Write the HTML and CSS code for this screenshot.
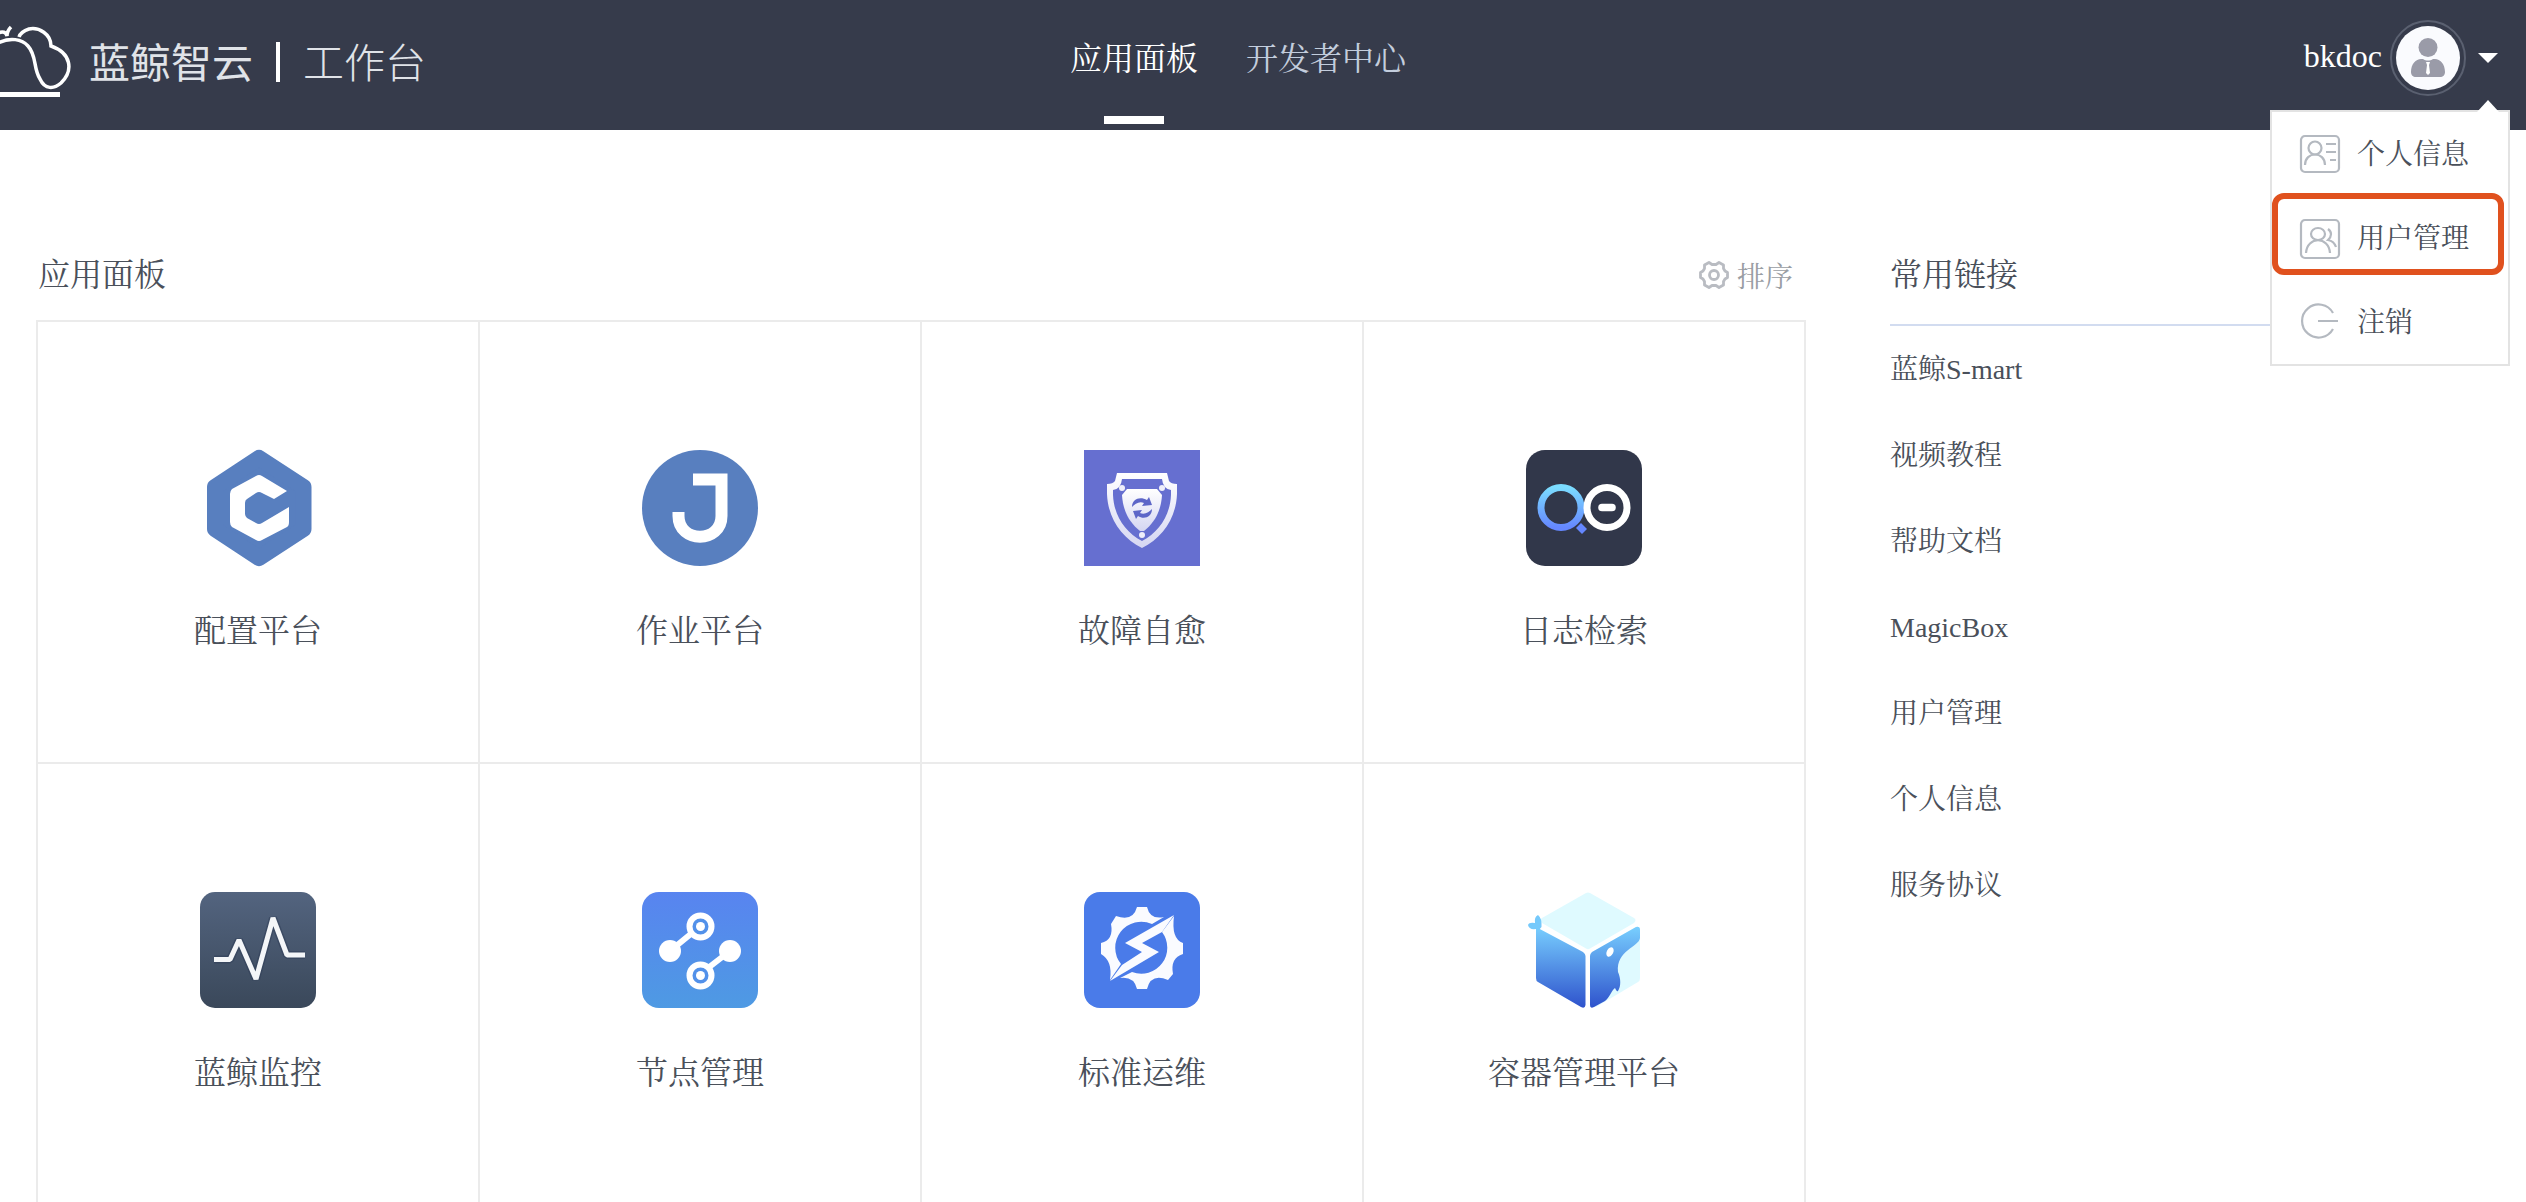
FILE: index.html
```html
<!DOCTYPE html>
<html lang="zh-CN">
<head>
<meta charset="utf-8">
<title>蓝鲸智云工作台</title>
<link rel="stylesheet" href="styles.css">
</head>
<body>
<header class="topbar">
  <a class="brand">
    <svg class="brand-mark" viewBox="0 0 72 130" fill="none" stroke="#fff">
      <path d="M-2 43C10 37 22 39 28 46C37 56 33 68 40 79C45 90 54 89 61 83C74 70 71 53 51 46C51 34 39 27 29 29C23 31 20 34 19 37" stroke-width="3.500"/>
      <path d="M-2 33C3 31 6 32 7 36C7 32 9 29 11 27" stroke-width="3.500"/>
      <path d="M0 94.500H60" stroke-width="5"/>
    </svg>
    <span class="brand-name">蓝鲸智云</span>
    <i class="brand-rule"></i>
    <span class="brand-sub">工作台</span>
  </a>
  <nav class="nav">
    <a class="nav-item active">应用面板</a>
    <a class="nav-item">开发者中心</a>
  </nav>
  <div class="user">
    <span class="user-name">bkdoc</span>
    <svg class="avatar" viewBox="0 0 76 76">
      <circle cx="38" cy="38" r="37" fill="none" stroke="#5a6070" stroke-width="2"/>
      <circle cx="38" cy="38" r="32" fill="#fafbfe"/>
      <circle cx="38" cy="27.500" r="9.500" fill="#9a9ba8"/>
      <path d="M21 52C21 44 26 39 31 39H33C36 41 40 41 43 39H45C50 39 55 44 55 52C55 55 53 57 50 57H26C23 57 21 55 21 52Z" fill="#9a9ba8"/>
      <path d="M36 42H40L39 45L40 53L38 55L36 53L37 45Z" fill="#fff"/>
    </svg>
    <i class="caret"></i>
    <div class="menu">
      <a class="menu-item">
        <svg class="menu-icon" viewBox="0 0 40 40" fill="none" stroke="#b4b9c0" stroke-width="2.200">
          <rect x="1" y="1" width="38" height="36" rx="4"/>
          <circle cx="15" cy="13" r="6.500"/><path d="M5 30C5 16 25 16 25 30M26 9H36M26 17H36M30 25H36"/>
        </svg>
        <span>个人信息</span>
      </a>
      <a class="menu-item picked">
        <svg class="menu-icon" viewBox="0 0 40 40" fill="none" stroke="#b4b9c0" stroke-width="2.200">
          <rect x="1" y="1" width="38" height="38" rx="4"/>
          <ellipse cx="18" cy="15" rx="7" ry="6"/><path d="M6 34C7 17 29 17 30 34M28 10C32 13 32 17 28 21C33 22 35 25 36 28"/>
        </svg>
        <span>用户管理</span>
      </a>
      <a class="menu-item">
        <svg class="menu-icon" viewBox="0 0 40 40" fill="none" stroke="#b4b9c0" stroke-width="2.200">
          <path d="M33 10A16.500 16.500 0 1 0 33 26M18 18H38"/>
        </svg>
        <span>注销</span>
      </a>
    </div>
  </div>
</header>

<main class="page">
  <section class="board">
    <div class="board-head">
      <h2 class="title">应用面板</h2>
      <a class="sort">
        <svg class="sort-icon" viewBox="0 0 30 28" fill="none" stroke="#b9bcc2" stroke-width="2.800">
          <path d="M10 1.500L13 3.500H17L20 1.500L24.500 4V7.500L26 10L28.500 11.500V16.500L26 18L24.500 20.500V24L20 26.500L17 24.500H13L10 26.500L5.500 24V20.500L4 18L1.500 16.500V11.500L4 10L5.500 7.500V4Z" stroke-linejoin="round"/>
          <circle cx="15" cy="14" r="4.500"/>
        </svg>
        <span>排序</span>
      </a>
    </div>
    <div class="grid">
      <a class="app">
        <svg class="app-icon" viewBox="0 0 116 116">
          <path d="M59 8L103.500 37V79L59 108L15 79V37Z" fill="#587fbf" stroke="#587fbf" stroke-width="16" stroke-linejoin="round"/>
          <path d="M56 26Q59 24 62 26L87 41L74 49L62 43Q59 41 56 43L47 49Q45 50 45 53V64Q45 66 47 68L56 73Q59 75 62 73L89 57V72Q89 76 87 77L62 90Q59 92 56 90L32 77Q30 75 30 72V44Q30 41 32 39Z" fill="#fff"/>
        </svg>
        <span>配置平台</span>
      </a>
      <a class="app">
        <svg class="app-icon" viewBox="0 0 116 116">
          <circle cx="58" cy="58" r="58" fill="#587fbf"/>
          <path d="M51 29.500H79.500V66C79.500 93.500 36.500 93.500 36.500 66V62" fill="none" stroke="#fff" stroke-width="12"/>
        </svg>
        <span>作业平台</span>
      </a>
      <a class="app">
        <svg class="app-icon" viewBox="0 0 116 116">
          <defs><linearGradient id="shield" x2="0" y2="1"><stop stop-color="#fff"/><stop offset="1" stop-color="#d5d6f2"/></linearGradient></defs>
          <rect width="116" height="116" fill="#666fd0"/>
          <path fill="url(#shield)" fill-rule="evenodd" d="M33 23H83L85 31Q87 34 93 34V44C92 69 78 88 58 98C38 88 24 69 23 44V34Q29 34 31 31ZM38 29Q37 39 29 40V45C30 66 41 82 58 91C75 82 86 66 87 45V40Q79 39 78 29Z"/>
          <path fill="url(#shield)" d="M43 39H73L78 45C77 62 70 73 60 81H56C46 73 39 62 38 45Z"/>
          <g fill="#eeeefa"><circle cx="38" cy="38" r="3"/><circle cx="78" cy="38" r="3"/><circle cx="58" cy="85" r="3"/></g>
          <path fill="#5d66c8" d="M48 57C48 49 56 46 63 50L65 47L68 55L58 56L60 53C55 51 51 54 48 57ZM68 59C68 67 60 70 54 66L52 69L49 61L58 60L56 63C61 65 65 62 68 59Z"/>
        </svg>
        <span>故障自愈</span>
      </a>
      <a class="app">
        <svg class="app-icon" viewBox="0 0 116 116">
          <defs><linearGradient id="lens" x2="0" y2="1"><stop stop-color="#7bdcff"/><stop offset="1" stop-color="#6587ff"/></linearGradient></defs>
          <rect width="116" height="116" rx="19" fill="#31374a"/>
          <circle cx="35" cy="57.500" r="20" fill="none" stroke="url(#lens)" stroke-width="7"/>
          <circle cx="81" cy="57.500" r="20" fill="none" stroke="#fff" stroke-width="7"/>
          <path d="M76 57.500H86" stroke="#fff" stroke-width="7.500" stroke-linecap="round"/>
          <path d="M55 73L61 79L56 84L50 78Z" fill="#6587ff"/>
        </svg>
        <span>日志检索</span>
      </a>
      <a class="app">
        <svg class="app-icon" viewBox="0 0 116 116">
          <defs><linearGradient id="slate" x2="0" y2="1"><stop stop-color="#53647f"/><stop offset="1" stop-color="#3a485a"/></linearGradient></defs>
          <rect width="116" height="116" rx="15" fill="url(#slate)"/>
          <g fill="none" stroke-linejoin="bevel">
            <path d="M14 67.500H30L39 48L56 87L73 26L87 63H105" stroke="#2d3c55" stroke-width="8" opacity=".5"/>
            <path d="M14 67.500H30L39 48L56 87L73 26L87 63H105" stroke="#f4f6f8" stroke-width="5"/>
          </g>
        </svg>
        <span>蓝鲸监控</span>
      </a>
      <a class="app">
        <svg class="app-icon" viewBox="0 0 116 116">
          <defs><linearGradient id="sky" x2="0" y2="1"><stop stop-color="#5884f0"/><stop offset="1" stop-color="#4e9ae3"/></linearGradient></defs>
          <rect width="116" height="116" rx="17" fill="url(#sky)"/>
          <path d="M28 59L50 41M66 76L88 59" stroke="#fff" stroke-width="6"/>
          <g fill="#fff"><circle cx="28" cy="59" r="11"/><circle cx="88" cy="59" r="11"/></g>
          <g fill="#5291ea" stroke="#fff" stroke-width="6"><circle cx="58.500" cy="34.500" r="11"/><circle cx="58.500" cy="83.500" r="11"/></g>
          <g fill="#fff"><circle cx="58.500" cy="34.500" r="4.500"/><circle cx="58.500" cy="83.500" r="4.500"/></g>
        </svg>
        <span>节点管理</span>
      </a>
      <a class="app">
        <svg class="app-icon" viewBox="0 0 116 116">
          <rect width="116" height="116" rx="16" fill="#4a7be9"/>
          <path fill="#fafbff" d="M53 15H63Q66 28 80 25L68 32A26 26 0 0 0 37 72L26 88Q29 69 17 62V51Q30 48 27 32L32 24Q49 30 53 15Z"/>
          <path fill="#fafbff" d="M63 97H53Q50 84 36 86L48 80A26 26 0 0 0 78 40L90 24Q87 47 99 51V62Q86 66 89 82L84 88Q67 81 63 97Z"/>
          <path d="M90 23L41 51L58 60L38 73L26 89L75 60L58 51L78 40Z" fill="#fafbff"/>
        </svg>
        <span>标准运维</span>
      </a>
      <a class="app">
        <svg class="app-icon" viewBox="0 0 116 116">
          <defs><linearGradient id="ice" gradientUnits="userSpaceOnUse" x1="0" y1="34" x2="0" y2="116"><stop stop-color="#79d0ff"/><stop offset="1" stop-color="#2e52cc"/></linearGradient></defs>
          <path d="M60 1Q62 0 64 1L108 26Q111 28 108 31L64 56.500Q62 58 60 56.500L16 31Q13 28 16 26Z" fill="#dffaff"/>
          <path d="M10 35L57 60Q59.500 62 59.500 64V113Q59 117 55 115L12 90Q10 89 10 86Z" fill="url(#ice)"/>
          <path d="M10 37Q3 38 2 33Q3 30 9 31Q8 25 12 23Q16 26 15.500 35L12 39Z" fill="#75c9fb"/>
          <path d="M64 64Q64 62 66 60L110 35Q114 34 114 38V86Q114 89 112 90L70 115H64Z" fill="#dffaff"/>
          <path d="M64 64Q64 62 66 60L110 35Q114 34 114 38V46C113 55 90 58 92 80C95 87 95 94 92 99C91 100 90 98 89 96C85 99 84 105 79 109L68 115Q64 117 64 113Z" fill="url(#ice)"/>
          <ellipse cx="84" cy="60" rx="3.200" ry="5" transform="rotate(28 84 60)" fill="#fff"/>
        </svg>
        <span>容器管理平台</span>
      </a>
    </div>
  </section>
  <aside class="links">
    <h2 class="title">常用链接</h2>
    <ul class="link-list">
      <li>蓝鲸S-mart</li><li>视频教程</li><li>帮助文档</li><li>MagicBox</li><li>用户管理</li><li>个人信息</li><li>服务协议</li>
    </ul>
  </aside>
</main>
</body>
</html>
```
FILE: styles.css
```css
*, *::before, *::after { box-sizing: border-box; margin: 0; padding: 0; }
body { height: 1202px; overflow: hidden; background: #fff; color: #4a505a; font-family: "Liberation Serif", "Noto Serif CJK SC", "Noto Sans CJK SC", serif; }
svg { display: block; flex: none; overflow: visible; }
.topbar { height: 130px; background: #363b4b; display: grid; grid-template-columns: 1070px auto 1fr; }
.brand { display: flex; align-items: center; height: 124px; color: #e0e3e8; font: 400 41px/60px "Noto Sans CJK SC", sans-serif; }
.brand-mark { width: 72px; height: 130px; margin: 6px 17px 0 0; }
.brand-name, .brand-sub { padding-bottom: 5px; }
.brand-sub { font-weight: 300; }
.brand-rule { width: 4px; height: 40px; margin: 0 23px; background: #fff; }
.nav { display: flex; gap: 48px; font-size: 32px; line-height: 118px; }
.nav-item { height: 124px; color: #c3cddd; }
.active { color: #fff; display: flex; flex-direction: column; align-items: center; }
.active::after { content: ""; width: 60px; height: 8px; margin-top: -2px; background: #fff; }
.user { position: relative; display: flex; justify-content: flex-end; align-items: center; height: 116px; padding-right: 28px; color: #fff; font-size: 32px; }
.user-name { padding-bottom: 4px; }
.avatar { width: 76px; height: 76px; margin: 0 12px 0 8px; }
.caret { width: 20px; border: 10px solid transparent; border-top-color: #fff; border-bottom: 0; }
.menu { position: absolute; top: 110px; right: 16px; width: 240px; height: 256px; border: 2px solid #e3e3e3; background: #fff; color: #4a505a; font-size: 28px; }
.menu::before { content: ""; position: absolute; top: -12px; right: 9px; border: 11px solid transparent; border-bottom-color: #fff; border-top: 0; border-bottom-width: 12px; }
.menu-item { position: relative; display: flex; align-items: center; gap: 17px; height: 84px; padding-left: 28px; }
.menu-item span { padding-bottom: 4px; }
.menu-icon { width: 40px; height: 40px; margin-top: 2px; }
.picked::after { content: ""; position: absolute; left: 0; top: -3px; width: 232px; height: 82px; border: 6px solid #e0511e; border-radius: 12px; }
.page { display: flex; gap: 84px; padding: 110px 36px 0; }
.board { width: 1770px; flex: none; }
.board-head { display: flex; justify-content: space-between; align-items: center; height: 80px; padding: 0 13px 10px 2px; }
.title { font-size: 32px; font-weight: 400; line-height: 70px; }
.sort { display: flex; align-items: center; gap: 8px; color: #999da3; font-size: 28px; }
.sort-icon { width: 30px; height: 28px; }
.grid { display: grid; grid-template-columns: repeat(4, 442px); border: solid #ebebeb; border-width: 2px 0 0 2px; }
.app { height: 442px; border: solid #ebebeb; border-width: 0 2px 2px 0; padding-top: 128px; display: flex; flex-direction: column; align-items: center; font-size: 32px; }
.app:nth-child(n+5) { padding-top: 128px; }
.app-icon { width: 116px; height: 116px; margin-bottom: 41px; }
.app span { line-height: 48px; }
.links { width: 600px; flex: none; }
.links .title { height: 86px; border-bottom: 2px solid #d2dcf0; }
.link-list { list-style: none; padding-top: 1px; font-size: 28px; line-height: 86px; }
```
